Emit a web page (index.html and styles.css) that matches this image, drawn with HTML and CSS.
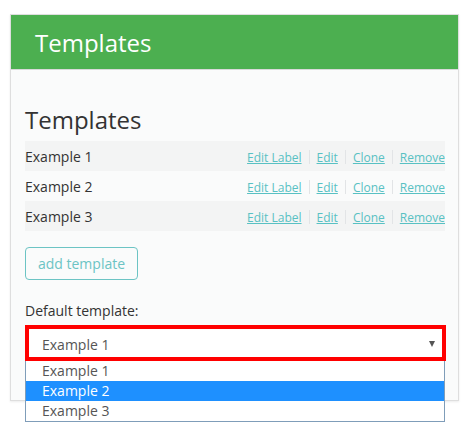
FILE: index.html
```html
<!DOCTYPE html>
<html>
<head>
<meta charset="utf-8">
<link rel="stylesheet" href="styles.css">
</head>
<body>
<div class="card">
  <div class="card-header">Templates</div>
  <div class="card-body">
    <h3 class="title">Templates</h3>
    <div class="rows">
      <div class="row striped">
        <span class="name">Example 1</span>
        <span class="actions"><a>Edit Label</a><i class="sep"></i><a>Edit</a><i class="sep"></i><a>Clone</a><i class="sep"></i><a>Remove</a></span>
      </div>
      <div class="row">
        <span class="name">Example 2</span>
        <span class="actions"><a>Edit Label</a><i class="sep"></i><a>Edit</a><i class="sep"></i><a>Clone</a><i class="sep"></i><a>Remove</a></span>
      </div>
      <div class="row striped">
        <span class="name">Example 3</span>
        <span class="actions"><a>Edit Label</a><i class="sep"></i><a>Edit</a><i class="sep"></i><a>Clone</a><i class="sep"></i><a>Remove</a></span>
      </div>
    </div>
    <button class="add-btn">add template</button>
    <div class="label">Default template:</div>
    <div class="select-wrap">
      <div class="select">
        <span>Example 1</span>
        <span class="arrow"></span>
      </div>
      <ul class="options">
        <li>Example 1</li>
        <li class="selected">Example 2</li>
        <li>Example 3</li>
      </ul>
    </div>
  </div>
</div>
</body>
</html>
```
FILE: styles.css
```css
* { box-sizing: border-box; }
html, body { margin: 0; background: #fff; }
body {
  padding: 14px 7px 0 10px;
  min-height: 432px;
  font-family: "Open Sans", "Liberation Sans", sans-serif;
  color: #333;
}
.card {
  border: 1px solid #dedede;
  background: #fafbfb;
  box-shadow: 0 1px 2px rgba(0,0,0,0.08);
  height: 387px;
}
.card-header {
  background: #4caf50;
  color: #fff;
  height: 55px;
  font-size: 24px;
  line-height: 55px;
  padding-left: 24px;
  border-bottom: 1px solid #d9d9d9;
}
.card-body {
  padding: 0 13px 0 14px;
}
.title {
  margin: 0;
  padding-top: 32px;
  font-size: 24px;
  font-weight: 400;
  line-height: 36px;
  height: 71px;
}
.rows { display: flex; flex-direction: column; }
.row {
  height: 30px;
  display: flex;
  align-items: center;
  justify-content: space-between;
  font-size: 14px;
}
.row.striped { background: #f3f4f4; }
.actions {
  display: flex;
  align-items: center;
  font-size: 12px;
  margin-top: 2px;
}
.actions a {
  color: #58c1c3;
  text-decoration: underline;
}
.sep {
  display: inline-block;
  width: 1px;
  height: 14px;
  background: #e2e4e6;
  margin: 0 7px;
}
.add-btn {
  display: block;
  margin-top: 16px;
  width: 113px;
  height: 33px;
  border: 1px solid #6cc4c4;
  border-radius: 4px;
  background: transparent;
  color: #6cc4c4;
  font-family: "Open Sans", "Liberation Sans", sans-serif;
  font-size: 14px;
  padding: 0;
}
.label {
  font-size: 14px;
  margin-top: 21px;
  line-height: 20px;
}
.select-wrap {
  position: relative;
  margin-top: 4px;
  width: 421px;
}
.select {
  height: 36px;
  border: 4px solid #ff0000;
  background: #fff;
  display: flex;
  align-items: center;
  justify-content: space-between;
  padding: 0 7px 0 13px;
  font-size: 14px;
  color: #555;
}
.select span:first-child { margin-top: 2px; }
.arrow {
  width: 0;
  height: 0;
  border-left: 3px solid transparent;
  border-right: 3px solid transparent;
  border-top: 6px solid #555;
  margin-top: 1px;
}
.options {
  position: absolute;
  top: 36px;
  left: 0;
  width: 420px;
  margin: 0;
  padding: 0;
  list-style: none;
  background: #fff;
  border: 1px solid #7f9db9;
  border-top: none;
  font-size: 14px;
  color: #555;
}
.options li {
  height: 20px;
  line-height: 20px;
  padding-left: 16px;
}
.options li.selected {
  background: #1e90ff;
  color: #fff;
}
```
